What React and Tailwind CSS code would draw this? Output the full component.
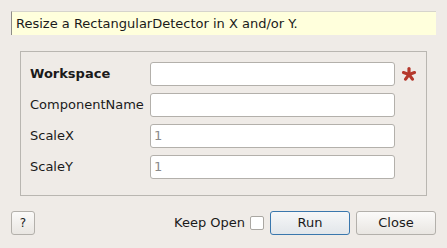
import React from "react";

const fields = [
  { name: "Workspace", bold: true, required: true, placeholder: "" },
  { name: "ComponentName", placeholder: "" },
  { name: "ScaleX", placeholder: "1" },
  { name: "ScaleY", placeholder: "1" },
];

// 5-arm red asterisk marking a mandatory property
const Star = () => (
  <svg width="16" height="14" viewBox="0 0 16 14" className="ml-[6px]">
    <g stroke="#b5382c" strokeWidth="3.2" strokeLinecap="round">
      <line x1="8" y1="7.4" x2="8" y2="1.6" />
      <line x1="8" y1="7.4" x2="2.5" y2="5.6" />
      <line x1="8" y1="7.4" x2="13.5" y2="5.6" />
      <line x1="8" y1="7.4" x2="4.6" y2="12.1" />
      <line x1="8" y1="7.4" x2="11.4" y2="12.1" />
    </g>
  </svg>
);

export default function App() {
  return (
    <div
      className="w-[447px] h-[248px] bg-[#efebe7] text-[13px] text-[#1a1a1a] flex flex-col px-[11px] pt-[11px]"
      style={{ fontFamily: '"DejaVu Sans", sans-serif' }}
    >
      {/* description */}
      <div className="h-[24px] w-[425px] bg-[#ffffdc] border-l border-t border-l-[#8e8c88] border-t-[#d6d4cc] flex items-center pl-[4px]">
        Resize a RectangularDetector in X and/or Y.
      </div>

      {/* property group */}
      <div className="mt-[16px] ml-[9px] w-[407px] h-[145px] border border-[#b9b6b1] flex flex-col gap-[7px] pl-[9px] pt-[10px]">
        {fields.map((f) => (
          <div key={f.name} className="flex items-center h-[24px]">
            <div className={`w-[120px] ${f.bold ? "font-bold" : ""}`}>{f.name}</div>
            <div className="w-[245px] h-[24px] bg-white border border-[#b3b0ab] rounded-[3px] flex items-center pl-[3px] text-[#8a8a8a]">
              {f.placeholder}
            </div>
            {f.required && <Star />}
          </div>
        ))}
      </div>

      {/* buttons */}
      <div className="mt-[15px] flex items-center h-[24px]">
        <button className="w-[24px] h-[24px] rounded-[3px] border border-[#b3b0ab] bg-gradient-to-b from-[#fbfaf9] to-[#e9e6e2] text-[12px] flex items-center justify-center">
          ?
        </button>
        <div className="ml-auto flex items-center">
          <span>Keep Open</span>
          <span className="ml-[5px] w-[14px] h-[14px] bg-white border border-[#aaa7a2] rounded-[2px]" />
          <button className="ml-[6px] w-[80px] h-[24px] rounded-[3px] border border-[#3a77ad] bg-gradient-to-b from-[#f6f7f8] to-[#e2e6ea] flex items-center justify-center">
            Run
          </button>
          <button className="ml-[6px] w-[80px] h-[24px] rounded-[3px] border border-[#b3b0ab] bg-gradient-to-b from-[#fbfaf9] to-[#e9e6e2] flex items-center justify-center">
            Close
          </button>
        </div>
      </div>
    </div>
  );
}
